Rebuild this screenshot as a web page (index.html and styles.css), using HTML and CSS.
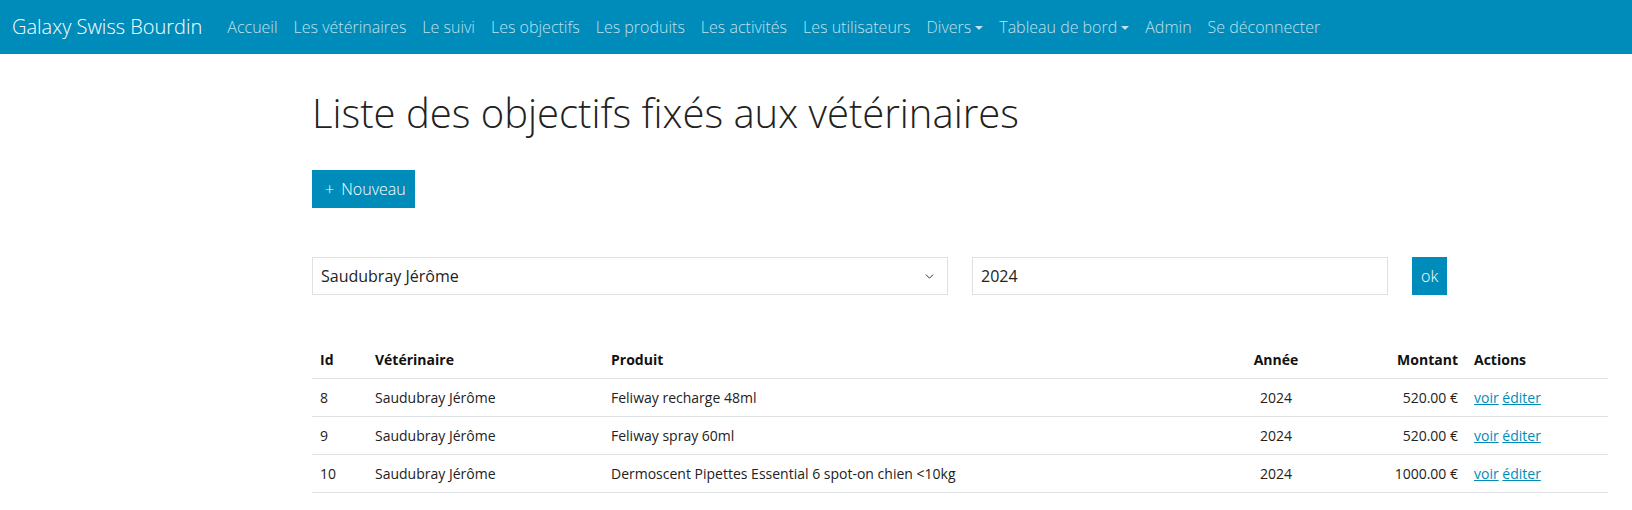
FILE: index.html
```html
<!DOCTYPE html>
<html lang="fr">
<head>
<meta charset="utf-8">
<title>Liste des objectifs</title>
<link rel="stylesheet" href="styles.css">
</head>
<body>
<nav class="navbar">
  <a class="brand" href="#">Galaxy Swiss Bourdin</a>
  <ul class="nav">
    <li><a class="nav-link" href="#">Accueil</a></li>
    <li><a class="nav-link" href="#">Les vétérinaires</a></li>
    <li><a class="nav-link" href="#">Le suivi</a></li>
    <li><a class="nav-link" href="#">Les objectifs</a></li>
    <li><a class="nav-link" href="#">Les produits</a></li>
    <li><a class="nav-link" href="#">Les activités</a></li>
    <li><a class="nav-link" href="#">Les utilisateurs</a></li>
    <li><a class="nav-link dropdown" href="#">Divers</a></li>
    <li><a class="nav-link dropdown" href="#">Tableau de bord</a></li>
    <li><a class="nav-link" href="#">Admin</a></li>
    <li><a class="nav-link" href="#">Se déconnecter</a></li>
  </ul>
</nav>

<main class="page">
  <h1 class="title">Liste des objectifs fixés aux vétérinaires</h1>
  <a class="btn btn-new" href="#"><span class="plus">+</span> Nouveau</a>

  <form class="filters">
    <select class="field field-select">
      <option>Saudubray Jérôme</option>
    </select>
    <input class="field field-year" type="text" value="2024">
    <button class="btn btn-ok" type="button">ok</button>
  </form>

  <table class="table">
    <colgroup>
      <col class="c-id"><col class="c-vet"><col class="c-prod"><col class="c-year"><col class="c-amount"><col class="c-actions">
    </colgroup>
    <thead>
      <tr>
        <th>Id</th><th>Vétérinaire</th><th>Produit</th><th class="center">Année</th><th class="right">Montant</th><th>Actions</th>
      </tr>
    </thead>
    <tbody>
      <tr>
        <td>8</td><td>Saudubray Jérôme</td><td>Feliway recharge 48ml</td><td class="center">2024</td><td class="right">520.00 €</td>
        <td><a href="#">voir</a> <a href="#">éditer</a></td>
      </tr>
      <tr>
        <td>9</td><td>Saudubray Jérôme</td><td>Feliway spray 60ml</td><td class="center">2024</td><td class="right">520.00 €</td>
        <td><a href="#">voir</a> <a href="#">éditer</a></td>
      </tr>
      <tr>
        <td>10</td><td>Saudubray Jérôme</td><td>Dermoscent Pipettes Essential 6 spot-on chien &lt;10kg</td><td class="center">2024</td><td class="right">1000.00 €</td>
        <td><a href="#">voir</a> <a href="#">éditer</a></td>
      </tr>
    </tbody>
  </table>
</main>
</body>
</html>
```

FILE: styles.css
```css
* { box-sizing: border-box; }

body {
  margin: 0;
  font-family: "Open Sans", "Liberation Sans", sans-serif;
  font-size: 16px;
  line-height: 1.5;
  color: #222;
  background: #fff;
}

/* Navbar */
.navbar {
  display: flex;
  align-items: center;
  height: 54px;
  padding: 0 12px;
  background: #008cba;
  font-weight: 300;
}
.brand {
  color: #fff;
  text-decoration: none;
  font-size: 20px;
  margin-right: 17px;
  white-space: nowrap;
}
.nav {
  display: flex;
  list-style: none;
  margin: 0;
  padding: 0;
}
.nav-link {
  display: block;
  padding: 8px 8px;
  font-size: 16px;
  color: rgba(255, 255, 255, 0.75);
  text-decoration: none;
  white-space: nowrap;
}
.dropdown::after {
  content: "";
  display: inline-block;
  margin-left: 4px;
  vertical-align: 3px;
  border-top: 4.5px solid;
  border-left: 4.5px solid transparent;
  border-right: 4.5px solid transparent;
}

/* Page */
.page {
  padding: 35px 24px 0 312px;
}
.title {
  margin: 0 0 33px;
  font-size: 40px;
  font-weight: 300;
  line-height: 1.2;
  color: #222;
}

.btn {
  display: inline-block;
  border: 1px solid #008cba;
  background: #008cba;
  color: #fff;
  font-family: inherit;
  font-size: 16px;
  font-weight: 300;
  line-height: 24px;
  text-decoration: none;
  border-radius: 0;
  cursor: pointer;
}
.btn-new {
  padding: 6px 8px 6px 12px;
}
.plus {
  margin-right: 3px;
}

.filters {
  display: flex;
  gap: 24px;
  margin: 49px 0 0;
}
.field {
  height: 38px;
  border: 1px solid #dee2e6;
  border-radius: 0;
  background-color: #fff;
  font-family: inherit;
  font-size: 16px;
  color: #222;
  padding: 0 8px;
  outline: none;
}
.field-select {
  width: 636px;
  appearance: none;
  -webkit-appearance: none;
  background-image: url("data:image/svg+xml,%3csvg xmlns='http://www.w3.org/2000/svg' viewBox='0 0 16 16'%3e%3cpath fill='none' stroke='%23222' stroke-linecap='round' stroke-linejoin='round' stroke-width='1.6' d='M2 5l6 6 6-6'/%3e%3c/svg%3e");
  background-repeat: no-repeat;
  background-position: right 12px center;
  background-size: 11px 9px;
}
.field-year {
  width: 416px;
}
.btn-ok {
  height: 38px;
  padding: 0 8px;
}

/* Table */
.table {
  width: 100%;
  margin-top: 46px;
  border-collapse: collapse;
  table-layout: fixed;
  font-size: 14px;
  line-height: 21px;
  color: #222;
}
.c-id { width: 55px; }
.c-vet { width: 236px; }
.c-prod { width: 627px; }
.c-year { width: 92px; }
.c-amount { width: 144px; }
.c-actions { width: 142px; }

.table th,
.table td {
  padding: 8px;
  text-align: left;
  border-bottom: 1px solid #dee2e6;
  white-space: nowrap;
}
.table th {
  font-weight: 700;
  color: #111;
}
.table .center { text-align: center; }
.table .right { text-align: right; }
.table a {
  color: #008cba;
  text-decoration: underline;
}
```
